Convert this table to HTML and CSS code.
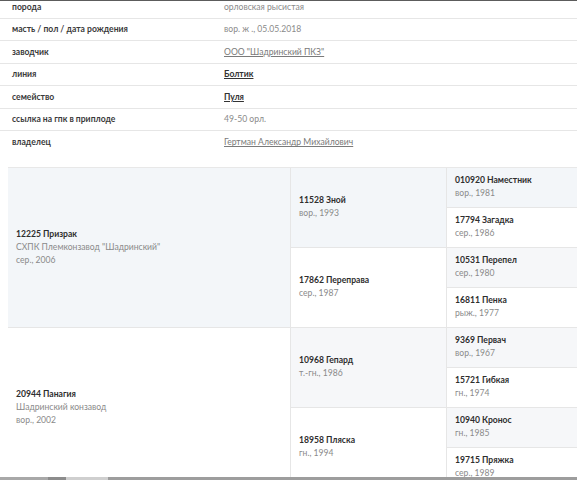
FILE: index.html
```html
<!DOCTYPE html>
<html lang="ru">
<head>
<meta charset="utf-8">
<link rel="stylesheet" href="styles.css">
</head>
<body>
<div class="topline"></div>
<div class="info">
  <div class="row first"><span class="label">порода</span><span class="value">орловская рысистая</span></div>
  <div class="row"><span class="label">масть / пол / дата рождения</span><span class="value">вор. ж ., 05.05.2018</span></div>
  <div class="row"><span class="label">заводчик</span><span class="value"><a class="link">ООО "Шадринский ПКЗ"</a></span></div>
  <div class="row"><span class="label">линия</span><span class="value"><a class="link strong">Болтик</a></span></div>
  <div class="row"><span class="label">семейство</span><span class="value"><a class="link strong">Пуля</a></span></div>
  <div class="row"><span class="label">ссылка на гпк в приплоде</span><span class="value">49-50 орл.</span></div>
  <div class="row last"><span class="label">владелец</span><span class="value"><a class="link">Гертман Александр Михайлович</a></span></div>
</div>

<div class="pedigree">
  <div class="cell g1 tint-b">
    <div class="name">12225 Призрак</div>
    <div class="meta">СХПК Племконзавод "Шадринский"</div>
    <div class="meta">сер., 2006</div>
  </div>
  <div class="cell g2 tint-b">
    <div class="name">11528 Зной</div>
    <div class="meta">вор., 1993</div>
  </div>
  <div class="cell g3 tint-b">
    <div class="name">010920 Наместник</div>
    <div class="meta">вор., 1981</div>
  </div>
  <div class="cell g3">
    <div class="name">17794 Загадка</div>
    <div class="meta">сер., 1986</div>
  </div>
  <div class="cell g2">
    <div class="name">17862 Переправа</div>
    <div class="meta">сер., 1987</div>
  </div>
  <div class="cell g3 tint-g">
    <div class="name">10531 Перепел</div>
    <div class="meta">сер., 1980</div>
  </div>
  <div class="cell g3">
    <div class="name">16811 Пенка</div>
    <div class="meta">рыж., 1977</div>
  </div>

  <div class="cell g1">
    <div class="name">20944 Панагия</div>
    <div class="meta">Шадринский конзавод</div>
    <div class="meta">вор., 2002</div>
  </div>
  <div class="cell g2 tint-g">
    <div class="name">10968 Гепард</div>
    <div class="meta">т.-гн., 1986</div>
  </div>
  <div class="cell g3 tint-g">
    <div class="name">9369 Первач</div>
    <div class="meta">вор., 1967</div>
  </div>
  <div class="cell g3">
    <div class="name">15721 Гибкая</div>
    <div class="meta">гн., 1974</div>
  </div>
  <div class="cell g2">
    <div class="name">18958 Пляска</div>
    <div class="meta">гн., 1994</div>
  </div>
  <div class="cell g3 tint-g">
    <div class="name">10940 Кронос</div>
    <div class="meta">гн., 1985</div>
  </div>
  <div class="cell g3">
    <div class="name">19715 Пряжка</div>
    <div class="meta">сер., 1989</div>
  </div>
</div>
<div class="bottombar"></div>
</body>
</html>
```
FILE: styles.css
```css
html, body {
  margin: 0;
  padding: 0;
  background: #ffffff;
  overflow: hidden;
}
body {
  font-family: Lato, "Liberation Sans", sans-serif;
  font-size: 8.6px;
  color: #333;
  height: 480px;
}
.topline {
  position: fixed;
  top: 0;
  left: 0;
  right: 0;
  height: 1px;
  background: #5c5c5c;
}
.bottombar {
  position: fixed;
  left: 0;
  right: 0;
  bottom: 0;
  height: 3px;
  background: linear-gradient(to right, #a8a8a8 0, #a8a8a8 48px, #8c8c8c 48px, #8c8c8c 66px, #cfcfcf 66px, #cfcfcf 108px, #9d9d9d 108px);
}
.info {
  margin-top: -4px;
}
.row {
  display: grid;
  grid-template-columns: 212px 1fr;
  align-items: center;
  height: 22.5px;
  padding-left: 12px;
  border-bottom: 1px solid #e6e6e6;
  box-sizing: border-box;
}
.row.last {
  border-bottom: none;
}
.label {
  font-weight: 700;
  color: #3a3a3a;
}
.value {
  color: #8a8a8a;
}
.link {
  color: #7a7a7a;
  text-decoration: underline;
}
.link.strong {
  color: #333;
  font-weight: 700;
}
.pedigree {
  margin: 13px 0 0 8px;
  display: grid;
  grid-template-columns: 283px 156px 140px;
  grid-template-rows: repeat(8, 40px);
  grid-auto-flow: column;
  border-top: 1px solid #e8e8e8;
}
.cell {
  display: flex;
  flex-direction: column;
  justify-content: center;
  padding-left: 8px;
  box-sizing: border-box;
  border-bottom: 1px solid #e6e6e6;
  border-right: 1px solid #e6e6e6;
  line-height: 13px;
  background: #fff;
}
.g1 { grid-column: 1; grid-row: span 4; }
.g2 { grid-column: 2; grid-row: span 2; }
.g3 { grid-column: 3; grid-row: span 1; }
.tint-b { background: #f3f6f9; }
.tint-g { background: #f6f7f9; }
.name {
  font-weight: 700;
  color: #2e2e2e;
}
.meta {
  color: #8a8a8a;
}
```
